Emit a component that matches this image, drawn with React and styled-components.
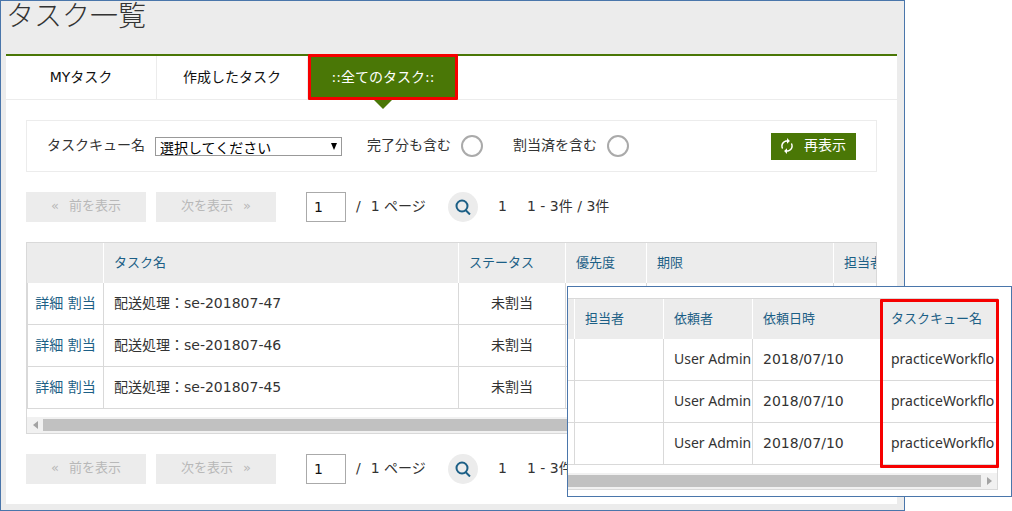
import React from "react";
import styled, { createGlobalStyle, css } from "styled-components";

const GlobalStyle = createGlobalStyle`
  *, *::before, *::after { box-sizing: border-box; }
  body {
    margin: 0;
    background: #fff;
    color: #333;
    font-family: "DejaVu Sans", "Noto Sans CJK JP", sans-serif;
    font-size: 14px;
    line-height: 20px;
  }
  button, input, select { font: inherit; }
`;

const green = "#4a7706";
const blue = "#1c5f86";
const grey = "#ececec";
const line = "#d9d9d9";
const frame = "#4a76ab";

const Stage = styled.div`
  position: relative;
  padding-right: 107px;
`;

const MainWindow = styled.main`
  padding: 0 7px 6px 5px;
  border: 1px solid ${frame};
  background: ${grey};
`;

const Title = styled.h1`
  margin: 0;
  padding-bottom: 21px;
  font-size: 28px;
  line-height: 32px;
  font-weight: 300;
`;

const Panel = styled.section`
  border-top: 2px solid ${green};
  background: #fff;
`;

const Tabs = styled.nav`
  display: flex;
  border-bottom: 1px solid ${grey};
`;

const Tab = styled.button`
  position: relative;
  width: 151px;
  height: 43px;
  padding: 0 0 2px;
  border: 0;
  border-right: 1px solid ${grey};
  background: #fff;
  color: #111;
  ${(p) =>
    p.$active &&
    css`
      width: 150px;
      border-right: 0;
      background: ${green};
      color: #fff;
      &::before {
        content: "";
        position: absolute;
        top: 100%;
        left: 50%;
        margin-left: -10px;
        border: 10px solid transparent;
        border-top-color: ${green};
        border-bottom: 0;
      }
    `}
`;

const Highlight = styled.span`
  position: absolute;
  top: ${(p) => (p.$column ? "1px" : "-2px")};
  right: ${(p) => (p.$column ? "-1px" : "0")};
  bottom: ${(p) => (p.$column ? "22px" : "-1px")};
  width: ${(p) => (p.$column ? "119px" : "150px")};
  border: 3px solid #f60000;
  border-radius: 1px;
  pointer-events: none;
`;

const Content = styled.div`
  display: flex;
  flex-direction: column;
  gap: 20px;
  padding: 20px;
`;

const Filter = styled.form`
  display: flex;
  align-items: center;
  height: 52px;
  padding: 0 20px;
  border: 1px solid ${grey};
`;

const Field = styled.label`
  display: flex;
  align-items: center;
  gap: 10px;
  margin-right: ${(p) => (p.$wide ? "25px" : "30px")};
  white-space: nowrap;
`;

const Text = styled.span`
  padding-bottom: 2px;
`;

const SelectBox = styled.span`
  position: relative;
  display: flex;
  &::after {
    content: "";
    position: absolute;
    top: 6px;
    right: 5px;
    border: 3px solid transparent;
    border-top: 7px solid #000;
    border-bottom: 0;
    pointer-events: none;
  }
`;

const Select = styled.select`
  appearance: none;
  width: 187px;
  height: 19px;
  padding: 2px 4px 0;
  border: 1px solid #999;
  border-radius: 0;
  background: #fff;
  color: #000;
  line-height: 17px;
`;

const Check = styled.input`
  appearance: none;
  width: 22px;
  height: 22px;
  margin: 0;
  border: 2px solid #aaa;
  border-radius: 50%;
  background: #fff;
`;

const Refresh = styled.button`
  display: flex;
  align-items: center;
  gap: 11px;
  height: 27px;
  margin-left: auto;
  padding: 0 10px;
  border: 0;
  background: ${green};
  color: #fff;
  white-space: nowrap;
`;

const PagerBar = styled.div`
  display: flex;
  align-items: center;
  height: 30px;
  white-space: nowrap;
`;

const PageButton = styled.button`
  display: flex;
  align-items: center;
  justify-content: center;
  gap: 10px;
  width: 120px;
  height: 30px;
  margin-right: 10px;
  padding: 0 0 2px;
  border: 0;
  background: ${grey};
  color: #b8b8b8;
  font-size: 13px;
`;

const PageInput = styled.input`
  width: 40px;
  height: 30px;
  margin: 0 10px 0 20px;
  padding: 0 7px;
  border: 1px solid #aaa;
  color: #111;
`;

const PageTotal = styled(Text)`
  display: flex;
  gap: 10px;
  width: 92px;
`;

const Search = styled.button`
  display: flex;
  align-items: center;
  justify-content: center;
  width: 30px;
  height: 30px;
  margin-right: 20px;
  padding: 0;
  border: 0;
  border-radius: 50%;
  background: ${grey};
`;

const PageNumber = styled(Text)`
  width: 29px;
`;

const ScrollFrame = styled.div`
  overflow: hidden;
  border: 1px solid ${line};
  border-left-width: ${(p) => (p.$cut ? "0" : "1px")};
`;

const Table = styled.table`
  width: ${(p) => p.$width}px;
  margin-bottom: 8px;
  border-spacing: 0;
  table-layout: fixed;
`;

const HeadCell = styled.th`
  height: 40px;
  padding: 0 10px;
  overflow: hidden;
  border-right: 1px solid #fff;
  background: ${grey};
  color: ${blue};
  font-size: 13px;
  font-weight: 400;
  text-align: left;
  white-space: nowrap;
`;

const Cell = styled.td`
  height: 42px;
  padding: 0 0 2px ${(p) => (p.$center ? "0" : "10px")};
  overflow: hidden;
  border-right: 1px solid ${line};
  border-bottom: 1px solid ${line};
  text-align: ${(p) => (p.$center ? "center" : "left")};
  white-space: nowrap;
  ${(p) => p.$edge && `border-left: 1px solid ${line};`}
  ${(p) => p.$latin && `font-family: "Noto Sans", sans-serif;`}
`;

const Link = styled.a`
  color: ${blue};
  text-decoration: none;
`;

const ScrollTrack = styled.div`
  display: flex;
  align-items: center;
  height: 16px;
  background: #f1f1f1;
`;

const Thumb = styled.div`
  flex: 1;
  height: 12px;
  background: #c1c1c1;
`;

const Arrow = styled.div`
  display: flex;
  justify-content: center;
  width: 16px;
  &::before {
    content: "";
    border: 4px solid transparent;
    ${(p) =>
      p.$right
        ? "border-left: 5px solid #a3a3a3; border-right: 0;"
        : "border-right: 5px solid #a3a3a3; border-left: 0;"}
  }
`;

const DetailWindow = styled.aside`
  position: absolute;
  top: 286px;
  right: 0;
  width: 445px;
  padding: 11px 13px 6px 0;
  border: 1px solid ${frame};
  background: #fff;
`;

const DetailBody = styled.div`
  position: relative;
`;

function Pager({ id }) {
  return (
    <PagerBar>
      <PageButton type="button" disabled>
        <span>«</span>前を表示
      </PageButton>
      <PageButton type="button" disabled>
        次を表示<span>»</span>
      </PageButton>
      <PageInput id={id} aria-label="ページ" defaultValue="1" />
      <PageTotal>
        <span>/</span>
        <span>1 ページ</span>
      </PageTotal>
      <Search type="button" aria-label="検索">
        <svg width="16" height="16" viewBox="0 0 16 16" fill="none" stroke={blue} strokeWidth="2">
          <circle cx="7" cy="7" r="5.5" />
          <path d="M10.5 11 15 15.5" />
        </svg>
      </Search>
      <PageNumber>1</PageNumber>
      <Text>1 - 3件 / 3件</Text>
    </PagerBar>
  );
}

const taskWidths = [77, 355, 107, 81, 187, 90];
const detailWidths = [7, 89, 89, 128, 160];
const sum = (list) => list.reduce((a, b) => a + b, 0);
const tasks = ["se-201807-47", "se-201807-46", "se-201807-45"];

const Columns = ({ widths }) => (
  <colgroup>
    {widths.map((w, i) => (
      <col key={i} width={w} />
    ))}
  </colgroup>
);

export default function App() {
  return (
    <Stage>
      <GlobalStyle />
      <MainWindow>
        <Title>タスク一覧</Title>
        <Panel>
          <Tabs>
            <Tab type="button">MYタスク</Tab>
            <Tab type="button">作成したタスク</Tab>
            <Tab type="button" $active>
              ::全てのタスク::
              <Highlight />
            </Tab>
          </Tabs>
          <Content>
            <Filter>
              <Field $wide>
                <Text>タスクキュー名</Text>
                <SelectBox>
                  <Select>
                    <option>選択してください</option>
                  </Select>
                </SelectBox>
              </Field>
              <Field>
                <Text>完了分も含む</Text>
                <Check type="checkbox" />
              </Field>
              <Field>
                <Text>割当済を含む</Text>
                <Check type="checkbox" />
              </Field>
              <Refresh type="button">
                <svg width="12" height="16" viewBox="4 1 16 22" fill="#fff">
                  <path d="M12 6v3l4-4-4-4v3c-4.42 0-8 3.58-8 8 0 1.57.46 3.03 1.24 4.26L6.7 14.8c-.45-.83-.7-1.79-.7-2.8 0-3.31 2.69-6 6-6zm6.76 1.74L17.3 9.2c.44.84.7 1.79.7 2.8 0 3.31-2.69 6-6 6v-3l-4 4 4 4v-3c4.42 0 8-3.58 8-8 0-1.57-.46-3.03-1.24-4.26z" />
                </svg>
                <Text>再表示</Text>
              </Refresh>
            </Filter>
            <Pager id="page-top" />
            <ScrollFrame>
              <Table $width={sum(taskWidths)}>
                <Columns widths={taskWidths} />
                <thead>
                  <tr>
                    {["", "タスク名", "ステータス", "優先度", "期限", "担当者"].map((h) => (
                      <HeadCell key={h}>{h}</HeadCell>
                    ))}
                  </tr>
                </thead>
                <tbody>
                  {tasks.map((t) => (
                    <tr key={t}>
                      <Cell $center $edge>
                        <Link href="#detail">詳細</Link> <Link href="#assign">割当</Link>
                      </Cell>
                      <Cell>配送処理：{t}</Cell>
                      <Cell $center>未割当</Cell>
                      <Cell />
                      <Cell />
                      <Cell />
                    </tr>
                  ))}
                </tbody>
              </Table>
              <ScrollTrack>
                <Arrow />
                <Thumb />
              </ScrollTrack>
            </ScrollFrame>
            <Pager id="page-bottom" />
          </Content>
        </Panel>
      </MainWindow>
      <DetailWindow>
        <DetailBody>
          <ScrollFrame $cut>
            <Table $width={sum(detailWidths)}>
              <Columns widths={detailWidths} />
              <thead>
                <tr>
                  {["", "担当者", "依頼者", "依頼日時", "タスクキュー名"].map((h) => (
                    <HeadCell key={h}>{h}</HeadCell>
                  ))}
                </tr>
              </thead>
              <tbody>
                {tasks.map((t) => (
                  <tr key={t}>
                    <Cell $center />
                    <Cell />
                    <Cell $latin>User Admin</Cell>
                    <Cell>2018/07/10</Cell>
                    <Cell $latin>practiceWorkflo</Cell>
                  </tr>
                ))}
              </tbody>
            </Table>
            <ScrollTrack>
              <Thumb />
              <Arrow $right />
            </ScrollTrack>
          </ScrollFrame>
          <Highlight $column />
        </DetailBody>
      </DetailWindow>
    </Stage>
  );
}
